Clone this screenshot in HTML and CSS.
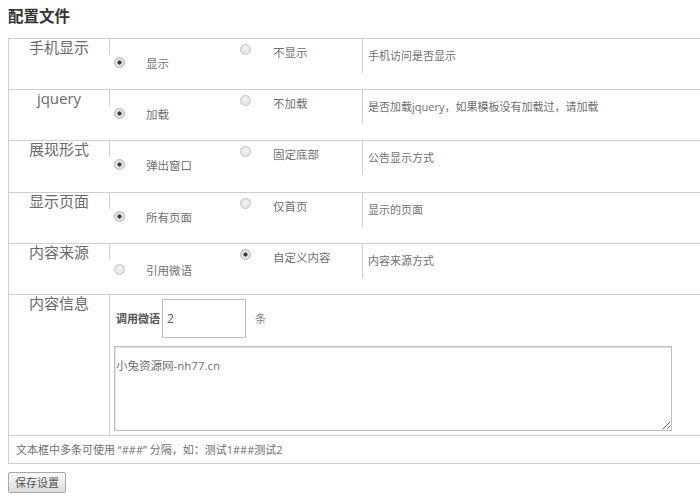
FILE: index.html
```html
<!DOCTYPE html>
<html lang="zh-CN">
<head>
<meta charset="utf-8">
<title>配置文件</title>
<link rel="stylesheet" href="styles.css">
</head>
<body>
<h1 class="title">配置文件</h1>
<form class="panel">
  <div class="row">
    <div class="label">手机显示</div>
    <div class="opts">
      <label class="opt low"><input class="radio" type="radio" name="m" checked><span>显示</span></label>
      <label class="opt high"><input class="radio" type="radio" name="m"><span>不显示</span></label>
    </div>
    <div class="desc">手机访问是否显示</div>
  </div>
  <div class="row">
    <div class="label">jquery</div>
    <div class="opts">
      <label class="opt low"><input class="radio" type="radio" name="j" checked><span>加载</span></label>
      <label class="opt high"><input class="radio" type="radio" name="j"><span>不加载</span></label>
    </div>
    <div class="desc">是否加载jquery，如果模板没有加载过，请加载</div>
  </div>
  <div class="row tall">
    <div class="label">展现形式</div>
    <div class="opts">
      <label class="opt low"><input class="radio" type="radio" name="s" checked><span>弹出窗口</span></label>
      <label class="opt high"><input class="radio" type="radio" name="s"><span>固定底部</span></label>
    </div>
    <div class="desc">公告显示方式</div>
  </div>
  <div class="row">
    <div class="label">显示页面</div>
    <div class="opts">
      <label class="opt low"><input class="radio" type="radio" name="p" checked><span>所有页面</span></label>
      <label class="opt high"><input class="radio" type="radio" name="p"><span>仅首页</span></label>
    </div>
    <div class="desc">显示的页面</div>
  </div>
  <div class="row">
    <div class="label">内容来源</div>
    <div class="opts">
      <label class="opt low lower"><input class="radio" type="radio" name="c"><span>引用微语</span></label>
      <label class="opt high"><input class="radio" type="radio" name="c" checked><span>自定义内容</span></label>
    </div>
    <div class="desc">内容来源方式</div>
  </div>
  <div class="row info-row">
    <div class="label">内容信息</div>
    <div class="info">
      <div class="count">
        <strong>调用微语</strong>
        <input class="num" type="text" value="2">
        <span class="unit">条</span>
      </div>
      <textarea class="content">小兔资源网-nh77.cn</textarea>
    </div>
  </div>
  <div class="note">文本框中多条可使用 “###” 分隔，如：测试1###测试2</div>
</form>
<button class="save" type="button">保存设置</button>
</body>
</html>
```

FILE: styles.css
```css
html, body {
  background: #fff;
}
body {
  margin: 0;
  padding: 5px 0 0 8px;
  overflow: hidden;
  font-family: "Open Sans", "Noto Sans CJK SC", sans-serif;
  color: #707070;
}
.title {
  margin: 0 0 13px;
  font-size: 15.5px;
  line-height: 20px;
  font-weight: bold;
  color: #333;
  font-family: "Noto Sans CJK SC", sans-serif;
}
.panel {
  border: 1px solid #cfcfcf;
  border-right: none;
  margin: 0;
}
.row {
  display: flex;
  align-items: flex-start;
  height: 50px;
  border-bottom: 1px solid #cfcfcf;
}
.row.tall {
  height: 51px;
}
.label {
  box-sizing: border-box;
  width: 101px;
  height: 16px;
  border-right: 1px solid #cfcfcf;
  text-align: center;
  font-size: 15px;
  line-height: 16px;
  color: #6a6a6a;
}
.opts {
  display: flex;
  align-items: flex-start;
  width: 252px;
  height: 100%;
}
.opt {
  display: flex;
  align-items: flex-start;
  width: 126px;
  font-size: 11.5px;
  line-height: 14px;
  color: #707070;
}
.opt.low {
  margin-top: 18px;
}
.opt.low.lower {
  margin-top: 20px;
}
.opt.high {
  margin-top: 5px;
}
.opt.low span {
  margin-top: 0;
  margin-left: 21px;
}
.opt.high span {
  margin-top: 2px;
  margin-left: 22px;
}
.radio {
  appearance: none;
  -webkit-appearance: none;
  box-sizing: border-box;
  width: 11px;
  height: 11px;
  margin: 0 0 0 4px;
  border-radius: 50%;
  border: 1px solid #c4c4c4;
  background: radial-gradient(circle at 50% 40%, #f4f4f4 0, #dcdcdc 100%);
}
.radio:checked {
  background: radial-gradient(circle, #333 0, #444 1.8px, #e8e8e8 2.4px, #d6d6d6 100%);
  border-color: #b5b5b5;
}
.desc {
  box-sizing: border-box;
  height: 34px;
  border-left: 1px solid #cfcfcf;
  padding: 10px 0 0 5px;
  font-size: 11px;
  line-height: 14px;
  color: #707070;
}
.row.info-row {
  height: 140px;
  align-items: stretch;
}
.info-row .label {
  height: auto;
}
.info {
  padding: 4px 0 0 4px;
}
.count {
  display: flex;
  align-items: center;
  font-size: 11px;
  line-height: 14px;
}
.count strong {
  margin-left: 2px;
  font-weight: bold;
  color: #555;
}
.num {
  box-sizing: border-box;
  width: 84px;
  height: 39px;
  margin: 0 0 0 2px;
  padding: 0 0 0 4px;
  border: 1px solid #bdbdbd;
  font-family: "Open Sans", "Noto Sans CJK SC", sans-serif;
  font-size: 12px;
  color: #555;
  outline: none;
}
.unit {
  margin-left: 9px;
  color: #888;
}
.content {
  display: block;
  box-sizing: border-box;
  width: 558px;
  height: 85px;
  margin: 8px 0 0;
  padding: 11px 1px 0;
  border: 1px solid #bdbdbd;
  box-shadow: inset 1px 1px 0 #e6e6e6;
  font-family: "Open Sans", "Noto Sans CJK SC", sans-serif;
  font-size: 11.5px;
  line-height: 16px;
  color: #707070;
  outline: none;
}
.note {
  height: 27px;
  padding-left: 7px;
  font-size: 11px;
  line-height: 27px;
  color: #707070;
}
.save {
  display: block;
  box-sizing: border-box;
  width: 58px;
  height: 21px;
  margin-top: 8px;
  padding: 0;
  border: 1px solid #a9a9a9;
  border-radius: 2px;
  background: linear-gradient(#fbfbfb, #dcdcdc);
  font-family: "Noto Sans CJK SC", sans-serif;
  font-size: 11px;
  line-height: 19px;
  color: #555;
}
```
